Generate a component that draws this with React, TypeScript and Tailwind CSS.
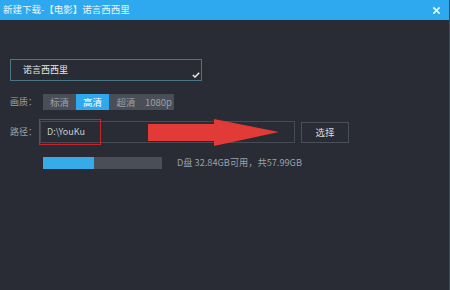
import React from "react";

export default function App() {
  const font = { fontFamily: '"Microsoft YaHei", "Noto Sans CJK SC", "Noto Sans", sans-serif' };
  return (
    <div className="w-[450px] h-[290px] bg-[#292c34] flex flex-col overflow-hidden border-r border-[#3b4b57]" style={font}>
      {/* title bar */}
      <div className="h-[20px] bg-[#2ea8ef] flex items-center justify-between pl-[3px] pr-[6px]">
        <span className="text-[9.5px] text-white/90 leading-none">新建下载-【电影】诺言西西里</span>
        <svg width="9" height="9" viewBox="0 0 10 10" className="mr-[2px]">
          <path d="M1.5 1.5 L8.5 8.5 M8.5 1.5 L1.5 8.5" stroke="#e8f5fd" strokeWidth="2" />
        </svg>
      </div>

      {/* name input */}
      <div className="pl-[10px] pt-[39px]">
        <div className="relative w-[192px] h-[22px] border border-[#4a7686] flex items-center pl-[12px]">
          <span className="text-[9px] text-[#e6e6e6]">诺言西西里</span>
          <svg width="8" height="6" viewBox="0 0 8 6" className="absolute right-[1px] bottom-[2px]">
            <path d="M0.8 3 L3 5 L7.2 0.8" stroke="#e6e6e6" strokeWidth="1.6" fill="none" />
          </svg>
        </div>
      </div>

      {/* quality */}
      <div className="flex items-center pl-[10px] pt-[13px] h-[29px]">
        <span className="w-[33px] text-[9px] text-[#9aa0a8]">画质：</span>
        <div className="flex h-[16px] text-[9.5px] leading-[16px]">
          <span className="w-[33px] bg-[#4a4f57] text-[#9aa0a8] text-center">标清</span>
          <span className="w-[33px] bg-[#2ea8ef] text-white text-center">高清</span>
          <span className="w-[34px] bg-[#4a4f57] text-[#9aa0a8] text-center">超清</span>
          <span className="w-[31px] bg-[#4a4f57] text-[#9aa0a8] text-center">1080p</span>
        </div>
      </div>

      {/* path */}
      <div className="flex items-center pl-[10px] pt-[11px]">
        <span className="w-[30px] text-[9px] text-[#9aa0a8]">路径：</span>
        <div className="relative w-[255px] h-[22px] border border-[#464b53] flex items-center pl-[6px]">
          <span className="text-[9px] text-[#c8ccd0]">D:\YouKu</span>
          <div className="absolute left-[-2px] top-[-3px] w-[62px] h-[26px] border-[1.5px] border-[#c8262b]" />
          <svg width="132" height="28" viewBox="0 0 132 28" className="absolute left-[107px] top-[-3px]">
            <polygon points="0,5 66,5 66,0 131,13 66,27 66,22 0,22" fill="#e23a36" />
          </svg>
        </div>
        <div className="ml-[6px] w-[48px] h-[21px] border border-[#4a4f57] flex items-center justify-center text-[9.5px] text-[#d8dadd]">
          选择
        </div>
      </div>

      {/* disk */}
      <div className="flex items-center pl-[43px] pt-[13px]">
        <div className="w-[119px] h-[12px] bg-[#4a4f57] flex">
          <div className="w-[51px] h-full bg-[#35abe8]" />
        </div>
        <span className="ml-[15px] text-[9.2px] text-[#9aa0a8]">D盘 32.84GB可用，共57.99GB</span>
      </div>
    </div>
  );
}
